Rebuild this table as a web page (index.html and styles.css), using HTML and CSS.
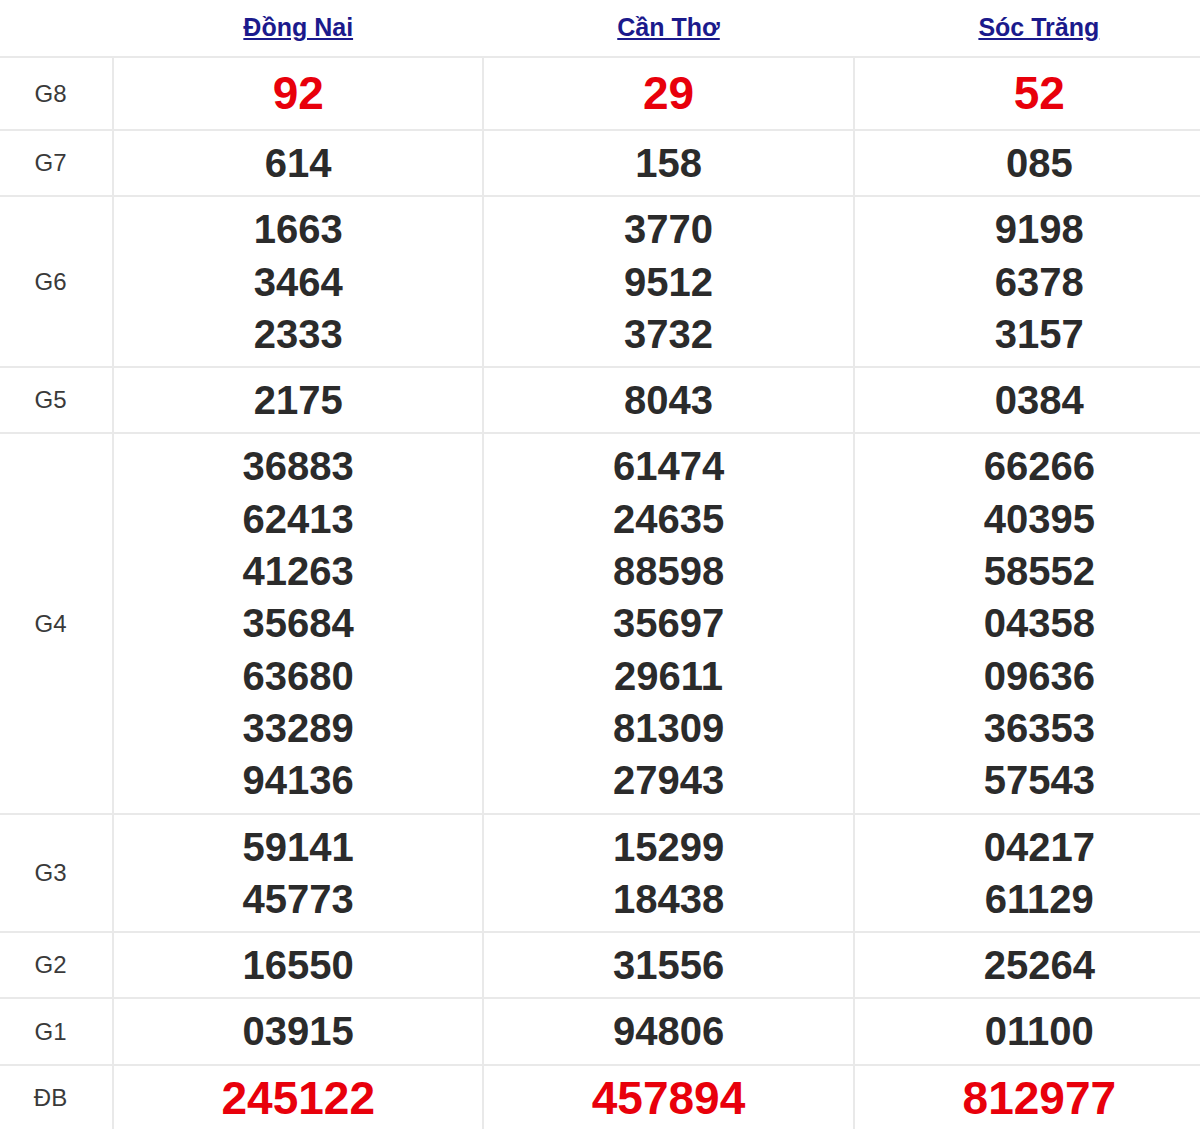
FILE: index.html
```html
<!DOCTYPE html>
<html lang="vi">
<head>
<meta charset="utf-8">
<title>Kết quả xổ số</title>
<link rel="stylesheet" href="styles.css">
</head>
<body>
<table class="kq">
  <colgroup>
    <col class="c-label">
    <col class="c-prov">
    <col class="c-prov">
    <col class="c-prov">
  </colgroup>
  <thead>
    <tr class="head">
      <th></th>
      <th><a href="#">Đồng Nai</a></th>
      <th><a href="#">Cần Thơ</a></th>
      <th><a href="#">Sóc Trăng</a></th>
    </tr>
  </thead>
  <tbody>
    <tr class="g8">
      <td class="lbl">G8</td>
      <td class="red">92</td>
      <td class="red">29</td>
      <td class="red">52</td>
    </tr>
    <tr>
      <td class="lbl">G7</td>
      <td>614</td>
      <td>158</td>
      <td>085</td>
    </tr>
    <tr>
      <td class="lbl">G6</td>
      <td><div>1663</div><div>3464</div><div>2333</div></td>
      <td><div>3770</div><div>9512</div><div>3732</div></td>
      <td><div>9198</div><div>6378</div><div>3157</div></td>
    </tr>
    <tr>
      <td class="lbl">G5</td>
      <td>2175</td>
      <td>8043</td>
      <td>0384</td>
    </tr>
    <tr>
      <td class="lbl">G4</td>
      <td><div>36883</div><div>62413</div><div>41263</div><div>35684</div><div>63680</div><div>33289</div><div>94136</div></td>
      <td><div>61474</div><div>24635</div><div>88598</div><div>35697</div><div>29611</div><div>81309</div><div>27943</div></td>
      <td><div>66266</div><div>40395</div><div>58552</div><div>04358</div><div>09636</div><div>36353</div><div>57543</div></td>
    </tr>
    <tr>
      <td class="lbl">G3</td>
      <td><div>59141</div><div>45773</div></td>
      <td><div>15299</div><div>18438</div></td>
      <td><div>04217</div><div>61129</div></td>
    </tr>
    <tr>
      <td class="lbl">G2</td>
      <td>16550</td>
      <td>31556</td>
      <td>25264</td>
    </tr>
    <tr>
      <td class="lbl">G1</td>
      <td>03915</td>
      <td>94806</td>
      <td>01100</td>
    </tr>
    <tr class="db">
      <td class="lbl">ĐB</td>
      <td class="red">245122</td>
      <td class="red">457894</td>
      <td class="red">812977</td>
    </tr>
  </tbody>
</table>
</body>
</html>
```
FILE: styles.css
```css
html, body {
  margin: 0;
  padding: 0;
  background: #fff;
  overflow: hidden;
}
.kq {
  width: 1224px;
  border-collapse: collapse;
  table-layout: fixed;
  font-family: "Liberation Sans", Arial, sans-serif;
  color: #2b2b2b;
}
.c-label { width: 113px; }
.c-prov { width: 370px; }
.kq th, .kq td {
  text-align: center;
  vertical-align: middle;
  padding: 0;
}
.head th {
  height: 55px;
  border-bottom: 2px solid #e9e9e9;
  font-size: 25px;
  font-weight: bold;
  padding-bottom: 1px;
}
.head a {
  color: #1b1a8c;
  text-decoration: underline;
}
.kq tbody td {
  border-top: 2px solid #e9e9e9;
  border-left: 2px solid #e9e9e9;
  font-size: 40px;
  font-weight: bold;
  line-height: 52.3px;
  padding: 6px 0;
}
.kq tbody td.lbl {
  border-left: none;
  font-size: 24px;
  font-weight: normal;
  color: #3a3a3a;
  line-height: 30px;
  padding-right: 11px;
}
.kq tbody td.red {
  color: #e8000b;
  font-size: 46px;
}
.g8 td { height: 59px; }
.db td { height: 53px; }
.kq tbody tr:first-child td { border-top: none; }
```
